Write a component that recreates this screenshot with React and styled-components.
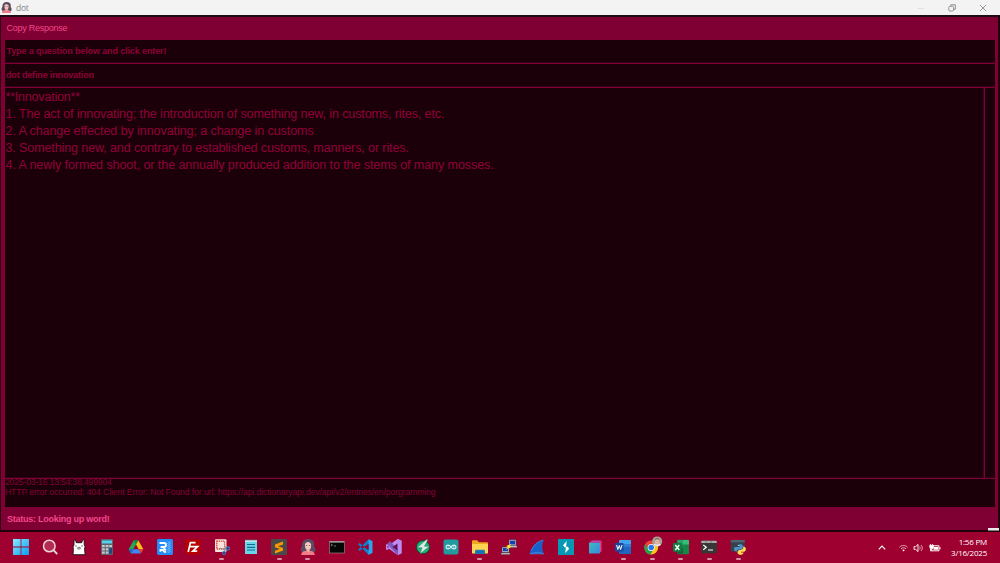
import React from "react";
import styled, { createGlobalStyle } from "styled-components";

const GlobalStyle = createGlobalStyle`
  * { box-sizing: border-box; }
  body { margin: 0; overflow: hidden; background: #9e002f; }
`;

const Desktop = styled.div`
  width: 1000px;
  height: 563px;
  display: flex;
  flex-direction: column;
  font-family: "Liberation Sans", Arial, sans-serif;
  white-space: nowrap;
`;

const TitleBar = styled.header`
  height: 15px;
  flex: none;
  display: flex;
  align-items: center;
  padding: 0 13px 0 1px;
  background: #f3f3f3;
  color: #858585;
`;

const Title = styled.span`
  flex: 1;
  margin-left: 4px;
  font: 8.5px/15px "Open Sans", "Noto Sans", sans-serif;
  letter-spacing: -0.3px;
`;

const WindowButtons = styled.div`
  display: flex;
  align-items: center;
  gap: 23px;
`;

const Window = styled.main`
  height: 517px;
  flex: none;
  display: flex;
  flex-direction: column;
  padding: 0 3px;
  background: #7f0033;
  border: solid #22000c;
  border-width: 2px 2px 2px 1px;
  border-top-color: #1d0c14;
  border-left-color: #2d0013;
`;

const MenuBar = styled.nav`
  height: 23px;
  flex: none;
  padding-left: 2.5px;
  font-size: 9px;
  line-height: 22px;
  letter-spacing: -0.25px;
  color: #f3468a;
`;

const Panels = styled.section`
  height: 467px;
  flex: none;
  display: flex;
  flex-direction: column;
  gap: 1px;
  margin: 0 0 0 0.5px;
  background: #7f0033;
`;

const Field = styled.div`
  height: 23px;
  flex: none;
  padding-left: ${(p) => p.$inset};
  background: #1b000a;
  border-bottom: 1px solid #35001a;
  color: #8d0036;
  font-size: 9px;
  font-weight: bold;
  line-height: 23px;
  letter-spacing: ${(p) => p.$spacing};
`;

const Response = styled.div`
  height: 390px;
  flex: none;
  display: flex;
  gap: 1px;
`;

const ResponseText = styled.div`
  flex: 1;
  padding: 1.4px 0 0 1px;
  background: #1b000a;
  border-right: 1px solid #43001e;
  border-bottom: 1px solid #35001a;
  color: #930038;
  font-size: 12.5px;
  line-height: 17px;
`;

const Line = styled.div`
  letter-spacing: ${(p) => p.$spacing || "0"};
`;

const Scrollbar = styled.div`
  width: 10px;
  background: #1b000a;
  border-bottom: 1px solid #35001a;
`;

const Log = styled.div`
  height: 28px;
  flex: none;
  overflow: hidden;
  background: #1b000a;
  color: #850034;
  font-size: 8.6px;
  line-height: 10px;
`;

const LogLines = styled.div`
  margin-top: -2px;
  padding-left: 0.5px;
`;

const Status = styled.footer`
  flex: 1;
  padding-left: 3px;
  color: #f3468a;
  font-size: 9px;
  font-weight: bold;
  line-height: 25px;
  letter-spacing: -0.25px;
`;

const Taskbar = styled.footer`
  position: relative;
  height: 31px;
  display: flex;
  align-items: center;
  background: #9e002f;
  color: #fff;
`;

const PeekMark = styled.div`
  position: absolute;
  right: 1px;
  top: -4px;
  width: 11px;
  height: 3px;
  background: #e9e9e9;
  border-bottom: 1px solid #8b7c82;
`;

const Apps = styled.div`
  display: flex;
  margin-left: 6.9px;
`;

const AppSlot = styled.div`
  width: 28.68px;
  height: 31px;
  display: flex;
  flex-direction: column;
  align-items: center;
  padding-top: 7.4px;
`;

const Running = styled.i`
  width: 5px;
  height: 2px;
  margin-top: 2.6px;
  border-radius: 1px;
  background: #d590a5;
`;

const Tray = styled.div`
  margin-left: auto;
  margin-right: 4px;
  display: flex;
  align-items: center;
`;

const TrayGap = styled.span`
  width: ${(p) => p.$w}px;
`;

const Clock = styled.div`
  width: 42px;
  margin: 0 13px 0 0;
  text-align: right;
  font: 8px/10.5px "Open Sans", "Noto Sans", sans-serif;
  letter-spacing: -0.22px;
`;

const Icon = ({ w = 16, h = 16, children }) => (
  <svg width={w} height={h} viewBox={`0 0 ${w} ${h}`} fill="none">{children}</svg>
);

const avatarArt = (
  <>
    <path d="M3 13.5C-.5 12 .8 9 2 7c-.3-5 3-7 6-7 5 0 7 3 6 7 1.4 2 2.5 5 0 6.5Z" fill="#5c4a63" />
    <path d="M5 5c1-2 4-3 6 0 .6 4-1 6.4-3 6.4S4.8 9 5 5Z" fill="#f4c9bc" />
    <path d="M6.6 10h3v1.7c2.6.3 4.9 1 5.2 4.3H1.2c.3-3.3 2.6-4 5.4-4.3Z" fill="#ee7d89" />
    <path d="M6.7 9.8h2.8V12L8 13.5 6.7 12Z" fill="#e9b1a7" />
    <path d="M6 6.5h1.2M9 6.5h1.2" stroke="#50394c" strokeWidth=".7" />
  </>
);

const icons = {
  windows: (
    <>
      <defs><linearGradient id="win" x1="0" y1="0" x2="1" y2="1"><stop stopColor="#8be9ff" /><stop offset="1" stopColor="#079eed" /></linearGradient></defs>
      <path d="M0 0h7.6v7.6H0zM8.4 0H16v7.6H8.4zM0 8.4h7.6V16H0zM8.4 8.4H16V16H8.4z" fill="url(#win)" />
    </>
  ),
  search: (
    <>
      <circle cx="7.3" cy="7" r="5.8" fill="#b52c52" stroke="#e7d5dc" strokeWidth="1.5" />
      <path d="m11.5 11.2 3.2 3.3" stroke="#e7d5dc" strokeWidth="1.8" strokeLinecap="round" />
    </>
  ),
  llama: (
    <>
      <path d="M3 1.2 4.3.5l1 3.2h5.4l1-3.2 1.5.7v4.3l.8 2-.4 2.6.5 5.6H2l.4-5.4L2 8l1-2.2Z" fill="#fff" stroke="#141014" strokeWidth=".9" />
      <path d="M4 7h2M10 7h2M6.2 9.2c0-1.3 3.6-1.3 3.6 0s-3.6 1.2-3.6 0ZM7.5 9h1" stroke="#343034" strokeWidth=".6" />
    </>
  ),
  calculator: (
    <>
      <rect x="2" y="0" width="12" height="16" rx="1" fill="#59636c" />
      <path d="M3 1.5h10v3H3z" fill="#55cfea" />
      <path d="M3 6h2.8v2.3H3zM6.7 6h2.8v2.3H6.7zM10.2 6H13v2.3h-2.8zM3 9.2h2.8v2.3H3zM6.7 9.2h2.8v2.3H6.7zM3 12.4h2.8v2.3H3zM6.7 12.4h2.8v2.3H6.7z" fill="#c2c6cb" />
      <path d="M10.2 9.2H13v5.5h-2.8z" fill="#174a83" />
    </>
  ),
  drive: (
    <>
      <path d="M5.6 1.4h4.8L5.3 10 3 14.4.6 10.2Z" fill="#24a853" />
      <path d="m5.6 1.4 2.4 4 2.5-4Z" fill="#118a40" />
      <path d="m10.4 1.4 5 8.8h-4.7L8 5.5Z" fill="#fbc013" />
      <path d="M.6 10.2h4.7L3 14.4Z" fill="#1968d2" />
      <path d="M5.3 10.2h5.4L13 14.4H3Z" fill="#4285f4" />
      <path d="M10.7 10.2h4.7L13 14.4Z" fill="#ea4335" />
    </>
  ),
  remote: (
    <>
      <rect width="16" height="16" rx="1.4" fill="#258bf7" />
      <path d="M2.5 4H7a2 2 0 0 1 0 4H3.6M3.4 12.8V11h2.4l1.6 1.8h1.8M6 8l3 3.5" stroke="#fff" strokeWidth="1.8" />
      <path d="m10.5 2.5 3 2-3 2 3 2-3 2 3 2-3 1.5M13.5 2.5l-3 2 3 2-3 2 3 2-3 2" stroke="#78bbff" strokeWidth=".7" />
    </>
  ),
  filezilla: (
    <>
      <rect x=".5" y=".5" width="15" height="15" rx="1" fill="#b90000" />
      <path d="M3.2 13 5.4 3.6h5.2M4.6 7.6h3.6M8 7.6h4.6l-4.8 4.6h4.4" stroke="#fff" strokeWidth="1.7" />
    </>
  ),
  snip: (
    <>
      <rect x="1" y=".3" width="11.5" height="12.7" rx="1" fill="#f5e5e0" />
      <rect x="2.8" y="2.2" width="7.8" height="7.8" fill="#f8e3dc" stroke="#d94932" strokeWidth="1.3" strokeDasharray="1.3 .7" />
      <path d="m6 9.3 6.5 1.5M12.5 6.5 10 13" stroke="#8298a8" strokeWidth="1.1" />
      <circle cx="14" cy="9.5" r="1.6" stroke="#2286cc" strokeWidth="1.1" /><circle cx="10" cy="14" r="1.5" stroke="#2286cc" strokeWidth="1.1" />
    </>
  ),
  notepad: (
    <>
      <path d="M2 1.5h12V15H2z" fill="#69d5e9" /><path d="M2 1h12v2H2z" fill="#bbe4e8" />
      <path d="M3 0v2M5 0v2M7 0v2M9 0v2M11 0v2M13 0v2" stroke="#547784" strokeWidth=".6" />
      <path d="M4 5.5h8M4 8.3h8M4 11h8" stroke="#126f90" strokeWidth="1.2" />
    </>
  ),
  sublime: (
    <>
      <rect width="16" height="16" rx="1" fill="#4b4947" />
      <path d="m4 5.5 8-3v3L7 7.3l5 1.7v2.5l-8 3v-2.8l5-1.8-5-1.7Z" fill="#ff9800" />
    </>
  ),
  avatar: avatarArt,
  terminal: (
    <>
      <rect x=".5" y="2.5" width="15" height="11.5" fill="#060606" stroke="#8c8588" strokeWidth=".7" />
      <path d="M1 3h14" stroke="#ccc" /><path d="m2 5 1.5 1L2 7M5 7h2" stroke="#aaa" strokeWidth=".7" />
    </>
  ),
  code: (
    <>
      <path d="M1 5.2 2.5 4 15.5 13.7l-4 2ZM1 10.8 2.5 12 15.5 2.3l-4-2Z" fill="#0b7fca" />
      <path d="m11.5.3 4 2v11.4l-4 2Z" fill="#2aa6ed" />
      <path d="M11.5 4.8 7.4 8l4.1 3.2Z" fill="#9e002f" />
    </>
  ),
  studio: (
    <>
      <path d="m11.5 0 4 1.7v12.6l-4 1.7L3 9.8l-1.8 1.3L0 10.4V5.6l1.2-.7L3 6.2Z" fill="#bf8af0" />
      <path d="m1.2 4.9 10.3 11.1 4-1.7L4 2Z" fill="#7f57ba" />
      <path d="M12 0l3.5 1.7v12.6L12 16Z" fill="#b98cf0" />
      <path d="m11.5 4.6-5 3.4 5 3.4ZM1.5 6.7v2.6L3 8Z" fill="#650c60" />
    </>
  ),
  bolt: (
    <>
      <circle cx="8" cy="8.2" r="6.6" fill="#19b66e" stroke="#07342d" strokeWidth=".7" />
      <path d="M11 .8 2 8.8h5L5 15 14.5 7.2H9.5L13 .8Z" fill="#d5eee6" stroke="#39776c" strokeWidth=".6" />
    </>
  ),
  arduino: (
    <>
      <rect x=".5" y=".5" width="15" height="15" rx="2" fill="#239aa0" />
      <path d="M8 8C6.2 5.2 3 5.7 3 8s3.2 2.8 5 0c1.8-2.8 5-2.3 5 0s-3.2 2.8-5 0Z" stroke="#d9f4f2" strokeWidth="1.1" />
      <path d="M4.5 8H6M10 8h1.6M10.8 7.2v1.6" stroke="#fff" strokeWidth=".5" />
    </>
  ),
  folder: (
    <>
      <path d="M0 2.2q0-1 1-1h4l2 2h8q1 0 1 1V14H0Z" fill="#eca91e" />
      <path d="M0 5h16v9.5H0Z" fill="#ffd251" />
      <path d="M3 15v-3q0-1.2 1.2-1.2h7.6q1.2 0 1.2 1.2v3Z" fill="#187cbe" /><path d="M5 13h6" stroke="#105c94" />
    </>
  ),
  putty: (
    <>
      <path d="M8 .8h7v6H8zM1 8h7v5.5H1z" fill="#c7cbd0" stroke="#363a4b" strokeWidth=".6" />
      <path d="M9 1.8h5v3.7H9zM2 9h5v3.2H2z" fill="#173dbb" />
      <path d="M7.5 6.8H16v1.8H7.5ZM0 14h9v1.6H0Z" fill="#d3d2d0" stroke="#403e4a" strokeWidth=".4" />
      <path d="M10.5 4.8 5 7l2 1-2.5 3 6-3.3-2-1Z" fill="#ffee22" />
    </>
  ),
  shark: (
    <>
      <path d="M.5 14.8C3 7 7.5 2 15.2.7 13 4 12.5 9 14.8 14.8Z" fill="#185fc7" />
      <path d="M1 14.8C6 13 10 12.8 14.8 14.8ZM2 12C5 5.5 8.5 2.5 14 1.2" stroke="#4089e3" strokeWidth=".8" />
    </>
  ),
  burp: (
    <>
      <path d="M0 0h16v16H0z" fill="#0799b4" />
      <path d="M8.7 2 5 6.2l1.5 2L8 8.5ZM8 7.5l2 .2L11 10l-3.8 4Z" fill="#fff" />
    </>
  ),
  cube: (
    <>
      <defs><linearGradient id="cube" x1="1" y1="1" x2="0" y2="0"><stop stopColor="#3a86dd" /><stop offset="1" stopColor="#3cbec0" /></linearGradient></defs>
      <path d="M2 3.8 5 1.4h9.5L12 3.8Z" fill="#bd45b0" /><path d="m12 3.8 2.5-2.4v10.8L12 14.5Z" fill="#e7378b" />
      <path d="M2 3.8h11v10.7H2Z" fill="url(#cube)" />
    </>
  ),
  word: (
    <>
      <rect x="4" y="1" width="12" height="14" rx="1" fill="#2167bd" /><path d="M4 2q0-1 1-1h10q1 0 1 1v3H4Z" fill="#42a4ed" /><path d="M4 5h12v3H4Z" fill="#2a80d4" />
      <rect y="4" width="8.5" height="8.5" rx=".8" fill="#164aa0" /><path d="m1.6 6 1.2 4.5 1.5-4 1.3 4L7 6" stroke="#fff" />
    </>
  ),
  chrome: (
    <>
      <circle cx="7.2" cy="8.5" r="7" fill="#e84335" />
      <path d="M1.2 5C-1.1 10.5 1.9 15 6.4 15.5L9.6 10H4.7Z" fill="#25a350" />
      <path d="M9.9 5.5h3.7c2 5-1.8 10.2-7.2 10L9.9 10Z" fill="#fbc417" />
      <circle cx="7.2" cy="8.5" r="3.5" fill="#fff" /><circle cx="7.2" cy="8.5" r="2.8" fill="#2978e7" />
      <circle cx="13.2" cy="2.4" r="5" fill="#a9a298" /><path d="M9.3 5.6c1-1.6 6.8-1.6 7.8 0-1.9 2.4-5.9 2.4-7.8 0Z" fill="#e8e8e5" /><ellipse cx="13.2" cy="2.5" rx="2.3" ry="3.3" fill="#ddb49e" /><path d="M10.8 1.3c.4-3.2 4.4-3.2 4.9 0L13.2 0Z" fill="#716158" />
    </>
  ),
  excel: (
    <>
      <rect x="4" y=".8" width="12" height="14.4" rx="1" fill="#178646" /><path d="M4.5 1H10v4.5H4.5Z" fill="#25a366" /><path d="M10 1h5q1 0 1 1v3.5h-6Z" fill="#35bd7a" /><path d="M4 9h6v5.5H4Z" fill="#145f38" />
      <rect y="4" width="8.8" height="8.8" rx=".8" fill="#107c41" /><path d="m2.3 6 4 5M6.3 6l-4 5" stroke="#fff" strokeWidth="1.3" />
    </>
  ),
  prompt: (
    <>
      <rect x=".2" y="1.7" width="15.6" height="12.6" rx="1" fill="#373737" /><path d="M.2 4V2.7q0-1 1-1h13.6q1 0 1 1V4Z" fill="#a9a9a9" /><path d="M5 1.7V4M10 1.7V4" stroke="#777" />
      <path d="m2.3 6 3 2.3-3 2.5M7 11h5" stroke="#fff" strokeWidth="1.2" />
    </>
  ),
  python: (
    <>
      <path d="M.8 1h14v11.5H.8Z" fill="#36434d" /><path d="M.8 1h14v2.3H.8Z" fill="#4d6672" />
      <path d="M7.5 6.8c.2-2.2 5.3-2.2 5.3 0v2.4c0 1.6-6 0-6 3.2-3 .4-4-4-1.2-4.5h4.2v-.7Z" fill="#4c91cb" />
      <path d="M13.2 7.5c3.4 0 3.6 5 .6 5.3H11v.6h2.6c-.4 3.3-6.1 2.8-6.1 0 .2-4 5.7-1.8 5.7-4.2Z" fill="#ffda55" /><circle cx="8.8" cy="6.5" r=".5" fill="#fff" />
    </>
  ),
};

const apps = [
  ["windows"], ["search"], ["llama"], ["calculator"], ["drive"], ["remote"], ["filezilla"],
  ["snip", true], ["notepad"], ["sublime", true], ["avatar", true], ["terminal"], ["code"],
  ["studio"], ["bolt"], ["arduino"], ["folder", true], ["putty"], ["shark"], ["burp"],
  ["cube"], ["word", true], ["chrome", true], ["excel", true], ["prompt", true], ["python", true],
];

export default function App() {
  return (
    <>
      <GlobalStyle />
      <Desktop>
        <TitleBar>
          <svg width="11" height="11" viewBox="0 0 16 16">{avatarArt}</svg>
          <Title>dot</Title>
          <WindowButtons>
            <Icon w={8} h={8}><path d="M1 4.5h6" stroke="#e1e1e1" /></Icon>
            <Icon w={8} h={8}><path d="M2.8 2V.8h4.5v4.5H6" stroke="#8c8c8c" /><rect x=".8" y="2.3" width="4.7" height="4.7" rx="1" stroke="#949494" /></Icon>
            <Icon w={8} h={8}><path d="m1 1 6 6M7 1 1 7" stroke="#8c8c8c" strokeWidth=".9" /></Icon>
          </WindowButtons>
        </TitleBar>
        <Window>
          <MenuBar>Copy Response</MenuBar>
          <Panels>
            <Field $inset="2px" $spacing="-0.12px">Type a question below and click enter!</Field>
            <Field $inset="1.5px" $spacing="-0.15px">dot define innovation</Field>
            <Response>
              <ResponseText>
                <Line $spacing="-0.2px">**Innovation**</Line>
                <Line $spacing="-0.1px">1. The act of innovating; the introduction of something new, in customs, rites, etc.</Line>
                <Line $spacing="-0.067px">2. A change effected by innovating; a change in customs</Line>
                <Line $spacing="-0.1px">3. Something new, and contrary to established customs, manners, or rites.</Line>
                <Line $spacing="-0.068px">4. A newly formed shoot, or the annually produced addition to the stems of many mosses.</Line>
              </ResponseText>
              <Scrollbar />
            </Response>
            <Log>
              <LogLines>
                <Line $spacing="-0.16px">2025-03-16 13:54:38.499904</Line>
                <Line $spacing="-0.083px">HTTP error occurred: 404 Client Error: Not Found for url: https://api.dictionaryapi.dev/api/v2/entries/en/porgramming</Line>
              </LogLines>
            </Log>
          </Panels>
          <Status>Status: Looking up word!</Status>
        </Window>
        <Taskbar>
          <PeekMark />
          <Apps>
            {apps.map(([name, running]) => (
              <AppSlot key={name}>
                <svg width="16" height="16" viewBox="0 0 16 16" fill="none" overflow="visible">{icons[name]}</svg>
                {running && <Running />}
              </AppSlot>
            ))}
          </Apps>
          <Tray>
            <Icon w={8} h={8}><path d="m.8 5.3 3.2-3.3 3.2 3.3" stroke="#fff" strokeWidth="1.1" /></Icon>
            <TrayGap $w={13} />
            <Icon w={9} h={8}>
              <path d="M.5 3.2c2.3-2.3 5.7-2.3 8 0M2 4.8c1.4-1.4 3.6-1.4 5 0" stroke="#e8bfcc" strokeWidth=".9" />
              <path d="M3.2 6.1c.8-.7 1.8-.7 2.6 0L4.5 7.6Z" fill="#fff" />
            </Icon>
            <TrayGap $w={5} />
            <Icon w={11} h={10}>
              <path d="M1 3.6h1.7L5 1.4v7.2L2.7 6.4H1Z" stroke="#fff" strokeWidth=".9" />
              <path d="M6.6 3.5c.7.9.7 2.1 0 3M8 2c1.7 1.8 1.7 4.2 0 6" stroke="#efcbd6" strokeWidth=".8" />
            </Icon>
            <TrayGap $w={5} />
            <Icon w={12} h={10}>
              <path d="M4 2.8h6v5H1.5V6" stroke="#fff" /><path d="M4.5 4h4.7v2.7H4.5zM10.5 4.2h1v2h-1z" fill="#fff" />
              <path d="M.8 2.3h3.6v2q0 1.7-1.8 1.7T.8 4.3ZM1.4 1v1.5M3.6 1v1.5M2.6 6v2" fill="#fff" stroke="#fff" strokeWidth=".8" />
            </Icon>
          </Tray>
          <Clock>1:56 PM<br />3/16/2025</Clock>
        </Taskbar>
      </Desktop>
    </>
  );
}
